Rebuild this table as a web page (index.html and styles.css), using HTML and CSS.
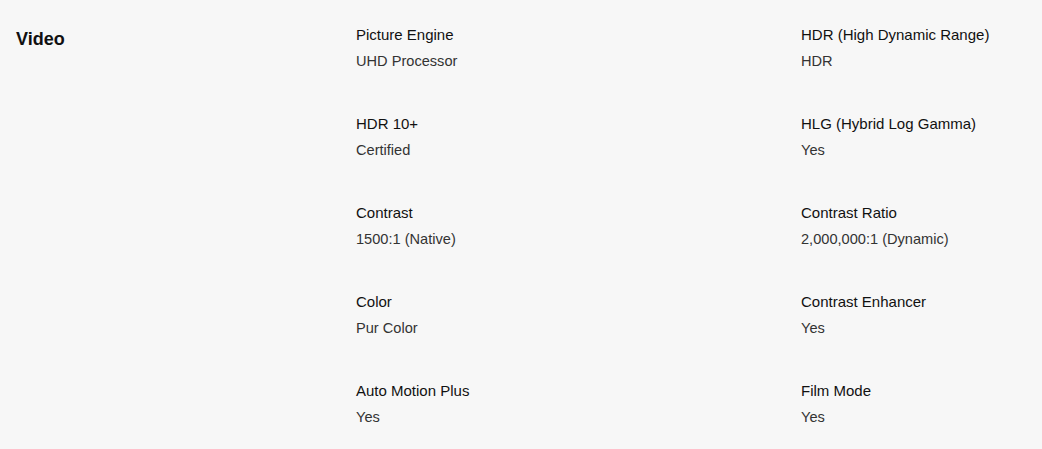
FILE: index.html
```html
<!DOCTYPE html>
<html>
<head>
<meta charset="utf-8">
<link rel="stylesheet" href="styles.css">
</head>
<body>
<section class="spec">
  <h2 class="spec-title">Video</h2>
  <div class="spec-grid">
    <div class="item"><div class="name">Picture Engine</div><div class="value">UHD Processor</div></div>
    <div class="item"><div class="name">HDR (High Dynamic Range)</div><div class="value">HDR</div></div>
    <div class="item"><div class="name">HDR 10+</div><div class="value">Certified</div></div>
    <div class="item"><div class="name">HLG (Hybrid Log Gamma)</div><div class="value">Yes</div></div>
    <div class="item"><div class="name">Contrast</div><div class="value">1500:1 (Native)</div></div>
    <div class="item"><div class="name">Contrast Ratio</div><div class="value">2,000,000:1 (Dynamic)</div></div>
    <div class="item"><div class="name">Color</div><div class="value">Pur Color</div></div>
    <div class="item"><div class="name">Contrast Enhancer</div><div class="value">Yes</div></div>
    <div class="item"><div class="name">Auto Motion Plus</div><div class="value">Yes</div></div>
    <div class="item"><div class="name">Film Mode</div><div class="value">Yes</div></div>
  </div>
</section>
</body>
</html>
```
FILE: styles.css
```css
html, body {
  margin: 0;
  padding: 0;
  background: #f7f7f7;
  font-family: "Liberation Sans", Arial, sans-serif;
  color: #000;
}
.spec {
  display: flex;
  padding: 24px 0 0 16px;
}
.spec-title {
  width: 340px;
  margin: 0;
  font-size: 18px;
  line-height: 30px;
  font-weight: 700;
  color: #111;
  flex: none;
}
.spec-grid {
  display: grid;
  grid-template-columns: 445px 1fr;
  row-gap: 41px;
}
.name {
  font-size: 15px;
  line-height: 22px;
  color: #111;
}
.value {
  margin-top: 4px;
  font-size: 14.6px;
  line-height: 22px;
  color: #333;
}
```
